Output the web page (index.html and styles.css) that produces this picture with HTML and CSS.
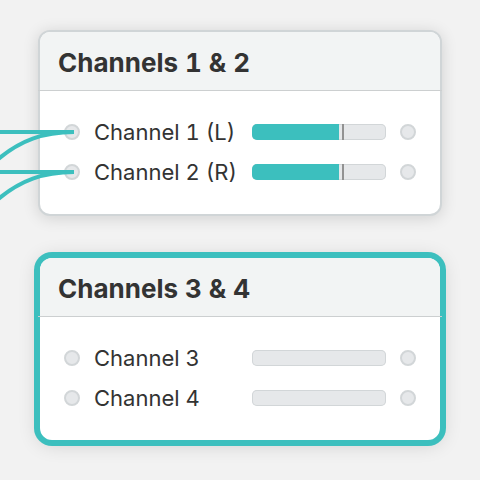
FILE: index.html
```html
<!DOCTYPE html>
<html lang="en">
<head>
<meta charset="utf-8">
<title>Channels</title>
<link rel="stylesheet" href="styles.css">
</head>
<body>
<main class="patchbay">
  <section class="device">
    <h2 class="device-title">Channels 1 &amp; 2</h2>
    <ul class="channels">
      <li class="channel">
        <button class="port" type="button" aria-label="Channel 1 input"></button>
        <span class="name">Channel 1 (L)</span>
        <div class="level"><div class="fill"></div><div class="peak"></div></div>
        <button class="port" type="button" aria-label="Channel 1 output"></button>
      </li>
      <li class="channel">
        <button class="port" type="button" aria-label="Channel 2 input"></button>
        <span class="name">Channel 2 (R)</span>
        <div class="level"><div class="fill"></div><div class="peak"></div></div>
        <button class="port" type="button" aria-label="Channel 2 output"></button>
      </li>
    </ul>
  </section>
  <section class="device selected">
    <h2 class="device-title">Channels 3 &amp; 4</h2>
    <ul class="channels">
      <li class="channel">
        <button class="port" type="button" aria-label="Channel 3 input"></button>
        <span class="name">Channel 3</span>
        <div class="level"></div>
        <button class="port" type="button" aria-label="Channel 3 output"></button>
      </li>
      <li class="channel">
        <button class="port" type="button" aria-label="Channel 4 input"></button>
        <span class="name">Channel 4</span>
        <div class="level"></div>
        <button class="port" type="button" aria-label="Channel 4 output"></button>
      </li>
    </ul>
  </section>
  <svg class="wires" width="80" height="220" viewBox="0 0 80 220" aria-hidden="true">
    <path d="M-4 132H74M74 132C44 132 20 140 -4 161M-4 172H74M74 172C44 172 20 180 -4 201"/>
  </svg>
</main>
</body>
</html>
```
FILE: styles.css
```css
* {
  box-sizing: border-box;
}

body {
  margin: 0;
  background: #f2f2f2;
  color: #333;
  font-family: Inter, "Liberation Sans", sans-serif;
  font-variant-numeric: tabular-nums;
}

.patchbay {
  position: relative;
  display: flex;
  flex-direction: column;
  gap: 40px;
  padding: 30px 38px;
}

.device {
  border: 2px solid #d0d5d7;
  border-radius: 12px;
  background: #fff;
  box-shadow: 0 2px 16px rgba(0, 0, 0, 0.14);
}

.device-title {
  position: relative;
  margin: 0;
  padding: 4px 18px 1px;
  border-radius: 10px 10px 0 0;
  background: #f2f4f4;
  font-size: 26px;
  font-weight: 700;
  line-height: 54px;
}

/* The divider runs across the card's border as well. */
.device-title::after {
  content: "";
  position: absolute;
  right: -2px;
  bottom: 0;
  left: -2px;
  height: 1px;
  background: #cccfd0;
}

.channels {
  display: flex;
  flex-direction: column;
  margin: 0;
  padding: 21px 24px 22px;
  list-style: none;
}

.channel {
  display: flex;
  align-items: center;
  height: 40px;
}

.port {
  flex: none;
  width: 16px;
  height: 16px;
  padding: 0;
  border: 2px solid #d2d6d8;
  border-radius: 50%;
  background: #e6e8ea;
}

.name {
  flex: 1;
  margin-left: 14px;
  font-size: 22px;
  line-height: 40px;
  white-space: nowrap;
}

.level {
  display: flex;
  flex: none;
  gap: 3px;
  width: 134px;
  height: 16px;
  margin-right: 14px;
  overflow: hidden;
  border-radius: 5px;
  background: #e6e8ea;
  box-shadow: inset 0 0 0 1px #d2d6d8;
}

.fill {
  width: 65%;
  background: #3cbfbe;
}

.peak {
  width: 2px;
  background: #929292;
}

.selected {
  border-color: #3cbfbe;
  border-radius: 14px;
  box-shadow: 0 0 0 4px #3cbfbe, 0 2px 20px rgba(0, 0, 0, 0.16);
}

.selected .device-title {
  border-radius: 12px 12px 0 0;
}

.wires {
  position: absolute;
  top: 0;
  left: 0;
  fill: none;
  stroke: #3cbfbe;
  stroke-width: 4;
  pointer-events: none;
}
```
